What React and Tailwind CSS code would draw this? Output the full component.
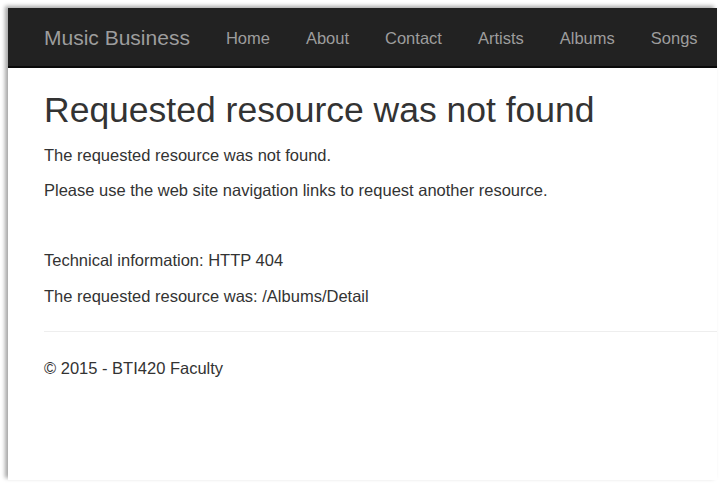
import React from 'react';

const links = ['Home', 'About', 'Contact', 'Artists', 'Albums', 'Songs'];

export default function App() {
  return (
    <div className="w-[721px] h-[484px] bg-white pt-[8px] pl-[8px] overflow-hidden" style={{ fontFamily: '"Liberation Sans", Arial, sans-serif' }}>
      <div className="w-[709px] h-[472px] bg-white shadow-[-3px_-2px_4px_rgba(0,0,0,0.35)]">
        <div className="h-[60px] bg-[#222222] border-b-2 border-[#0a0a0a] flex items-center pl-[36px] pt-[2px]">
          <span className="text-[21px] text-[#9d9d9d] mr-[36px]">Music Business</span>
          <div className="flex gap-[36px]">
            {links.map(l => (
              <span key={l} className="text-[16.5px] text-[#9d9d9d]">{l}</span>
            ))}
          </div>
        </div>

        <div className="pl-[36px] text-[#333333]">
          <h1 className="text-[35.5px] leading-none mt-[25px] mb-[16px]">Requested resource was not found</h1>
          <p className="text-[16.5px] leading-[20px] mb-[15px]">The requested resource was not found.</p>
          <p className="text-[16.5px] leading-[20px] mb-[50px]">Please use the web site navigation links to request another resource.</p>
          <p className="text-[16.5px] leading-[20px] mb-[16px]">Technical information: HTTP 404</p>
          <p className="text-[16.5px] leading-[20px] mb-[25px]">The requested resource was: /Albums/Detail</p>
          <hr className="border-t border-[#eeeeee] mb-[26px]" />
          <p className="text-[16.5px] leading-[20px]">© 2015 - BTI420 Faculty</p>
        </div>
      </div>
    </div>
  );
}
